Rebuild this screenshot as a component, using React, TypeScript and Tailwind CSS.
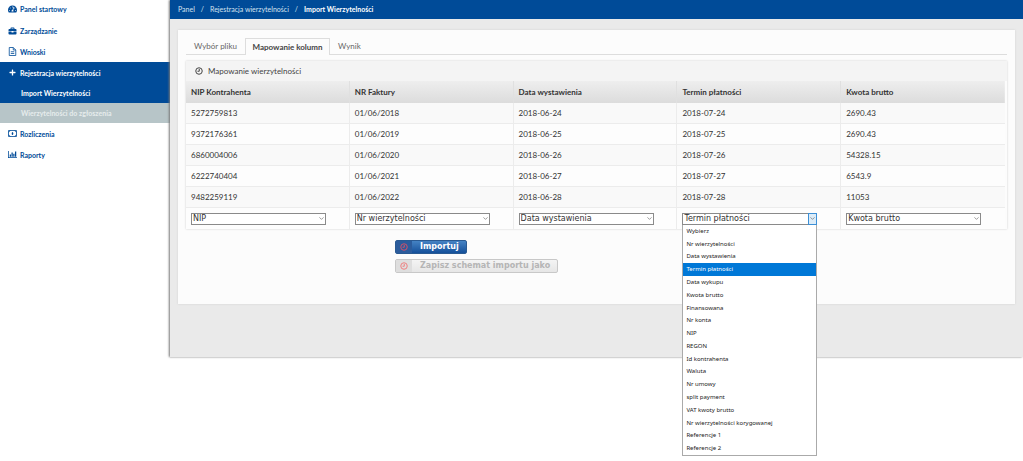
import { useState } from "react";
import { FaTachometerAlt, FaBriefcase, FaPlus } from "react-icons/fa";
import { FiChevronDown } from "react-icons/fi";

const columns = [
  { id: "nip", title: "NIP Kontrahenta", mapped: "NIP" },
  { id: "invoice", title: "NR Faktury", mapped: "Nr wierzytelności" },
  { id: "issued", title: "Data wystawienia", mapped: "Data wystawienia" },
  { id: "due", title: "Termin płatności", mapped: "Termin płatności" },
  { id: "gross", title: "Kwota brutto", mapped: "Kwota brutto" },
];

const rows = [
  ["5272759813", "01/06/2018", "2018-06-24", "2018-07-24", "2690.43"],
  ["9372176361", "01/06/2019", "2018-06-25", "2018-07-25", "2690.43"],
  ["6860004006", "01/06/2020", "2018-06-26", "2018-07-26", "54328.15"],
  ["6222740404", "01/06/2021", "2018-06-27", "2018-07-27", "6543.9"],
  ["9482259119", "01/06/2022", "2018-06-28", "2018-07-28", "11053"],
];

const options = [
  "Wybierz",
  "Nr wierzytelności",
  "Data wystawienia",
  "Termin płatności",
  "Data wykupu",
  "Kwota brutto",
  "Finansowana",
  "Nr konta",
  "NIP",
  "REGON",
  "Id kontrahenta",
  "Waluta",
  "Nr umowy",
  "split payment",
  "VAT kwoty brutto",
  "Nr wierzytelności korygowanej",
  "Referencje 1",
  "Referencje 2",
];

function FileIcon() {
  return (
    <svg viewBox="0 0 18 18" className="w-[9px] h-[9px]" fill="none" stroke="currentColor" strokeWidth="1.6">
      <path d="M2.5 1h8l5 5v11h-13zM10.5 1v5h5M5.5 9.5h7M5.5 13h7" />
    </svg>
  );
}

function MoneyIcon() {
  return (
    <svg viewBox="0 0 18 14" className="w-[9px] h-[7px]" fill="none" stroke="currentColor" strokeWidth="1.6">
      <path d="M1 1h16v12H1zM1 4c1.500 0 3-1.500 3-3M17 4c-1.500 0-3-1.500-3-3M1 10c1.500 0 3 1.500 3 3M17 10c-1.500 0-3 1.500-3 3" />
      <ellipse cx="9" cy="7" rx="1.600" ry="3" fill="currentColor" stroke="none" />
    </svg>
  );
}

function ChartIcon() {
  return (
    <svg viewBox="0 0 18 14" className="w-[9px] h-[7px]" fill="currentColor">
      <path d="M0 0h1.5v12.5H18V14H0zM3.5 7H6v4.5H3.5zM7 3h2.5v8.5H7zM10.5 5.5H13v6h-2.5zM14 1h2.5v10.5H14z" />
    </svg>
  );
}

function ClockIcon() {
  return (
    <svg viewBox="0 0 16 16" className="w-2 h-2" fill="none" stroke="currentColor" strokeWidth="2">
      <circle cx="8" cy="8" r="6.5" />
      <path d="M8.5 4v4.500H5" />
    </svg>
  );
}

function Sidebar() {
  const link = "flex items-center gap-[3px] pl-2 h-[21px] text-[#004b98]";
  return (
    <nav className="w-[170px] shrink-0 text-[7px] leading-[10px] font-bold">
      <a href="#" className="flex items-center gap-[3px] pl-2 pb-[2px] h-5 text-[#004b98]">
        <FaTachometerAlt className="w-[9px] h-2" />
        Panel startowy
      </a>
      <a href="#" className={link}>
        <FaBriefcase className="w-[9px] h-2" />
        Zarządzanie
      </a>
      <a href="#" className={link}>
        <FileIcon />
        Wnioski
      </a>
      <a href="#" className="flex items-center gap-[3px] pl-2 h-[21px] bg-[#004b98] text-white">
        <FaPlus className="w-[9px] h-[7px]" />
        Rejestracja wierzytelności
      </a>
      <a href="#" className="flex items-center pl-[21px] h-5 bg-[#004b98] text-white">
        Import Wierzytelności
      </a>
      <a href="#" className="flex items-center pl-[21px] h-5 bg-[#b7c5c8] text-[#e6ecec]">
        Wierzytelności do zgłoszenia
      </a>
      <a href="#" className={link}>
        <MoneyIcon />
        Rozliczenia
      </a>
      <a href="#" className={link}>
        <ChartIcon />
        Raporty
      </a>
    </nav>
  );
}

function ColumnSelect({ id, title, mapped }: any) {
  const [value, setValue] = useState<string>(mapped);
  const [open, setOpen] = useState(id === "due");

  return (
    <div className="relative w-[135px]">
      <select
        aria-label={title}
        value={value}
        onChange={(e) => setValue(e.target.value)}
        className="block w-full h-3 appearance-none border border-[#8a8a8a] bg-white pl-px font-['DejaVu_Sans'] text-[8px] leading-[10px] text-[#333]"
      >
        {options.map((o) => (
          <option key={o}>{o}</option>
        ))}
      </select>
      <span
        className={
          open
            ? "absolute right-0 top-0 flex h-3 w-[9px] items-center justify-center border border-[#3c8fd6] bg-[#dcecf8] pointer-events-none"
            : "absolute right-0 top-0 flex h-3 w-[9px] items-center justify-center pointer-events-none"
        }
      >
        <FiChevronDown className="h-[7px] w-[7px] shrink-0 text-[#555]" />
      </span>
      {open && (
        <ul
          role="listbox"
          className="absolute left-0 top-3 z-10 grid h-[231px] w-full auto-rows-fr border border-t-0 border-[#aaa] bg-white font-['Noto_Sans'] text-[6px] leading-[10px] text-[#222]"
        >
          {options.map((o) => (
            <li
              key={o}
              role="option"
              aria-selected={o === value}
              onClick={() => {
                setValue(o);
                setOpen(false);
              }}
              className={o === value ? "flex items-center bg-[#0078d7] pl-[3px] text-white" : "flex items-center pl-[3px]"}
            >
              {o}
            </li>
          ))}
        </ul>
      )}
    </div>
  );
}

export default function App() {
  return (
    <div className="flex min-h-screen items-start bg-white font-['Lato',sans-serif] text-[#333]">
      <Sidebar />
      <div className="flex-1 min-w-0 bg-[#eaeaea] pb-[53px] shadow-[-1px_0_2px_#777]">
        <header className="flex items-center gap-[6px] h-[19px] bg-[#004b98] pl-2 pb-[2px] text-[7px] leading-[10px] text-[#d5e2ef]">
          <a href="#">Panel</a>
          <span>/</span>
          <a href="#">Rejestracja wierzytelności</a>
          <span>/</span>
          <span className="font-bold text-white">Import Wierzytelności</span>
        </header>
        <main className="mt-[11px] mx-2 bg-[#fcfcfc] px-2 pt-2 pb-[31px] shadow-[0_0_2px_#d0d0d0]">
          <div className="flex h-[17px] border-b border-[#ddd] text-[8px] leading-[10px] text-[#666]">
            <button type="button" className="px-2 w-[59px] whitespace-nowrap">Wybór pliku</button>
            <button type="button" className="h-[17px] w-[85px] border border-b-0 border-[#ddd] bg-[#fcfcfc] font-bold text-[#444] whitespace-nowrap">
              Mapowanie kolumn
            </button>
            <button type="button" className="px-2">Wynik</button>
          </div>
          <section className="mt-[6px] shadow-[0_0_2px_#ccc]">
            <h2 className="flex items-center gap-[5px] h-5 bg-[#f4f4f4] pl-[9px] text-[8px] leading-[10px] text-[#444]">
              <ClockIcon />
              Mapowanie wierzytelności
            </h2>
            <div className="pr-[2px]">
              <table className="w-full table-fixed border-separate border-spacing-0 text-[8px] leading-[10px]">
                <thead>
                  <tr className="h-[22px] bg-linear-to-b from-[#eeeeee] to-[#dcdcdc]">
                    {columns.map((c) => (
                      <th key={c.id} className="pl-[5px] text-left font-bold border-r border-[#e0e0e0] last:border-r-0">
                        {c.title}
                      </th>
                    ))}
                  </tr>
                </thead>
                <tbody>
                  {rows.map((row) => (
                    <tr key={row[0]} className="h-[21px] odd:bg-[#f9f9f9] even:bg-[#fdfdfd]">
                      {row.map((cell, i) => (
                        <td key={i} className="pl-[5px] border-b border-r border-[#ececec] last:border-r-0">
                          {cell}
                        </td>
                      ))}
                    </tr>
                  ))}
                  <tr className="h-[21px] bg-[#fdfdfd]">
                    {columns.map((c) => (
                      <td key={c.id} className="pl-[5px] border-r border-[#ececec] last:border-r-0">
                        <ColumnSelect {...c} />
                      </td>
                    ))}
                  </tr>
                </tbody>
              </table>
            </div>
          </section>
          <div className="mt-[11px] ml-[209px] flex flex-col items-start gap-[5px] font-['DejaVu_Sans'] text-[8px] leading-[10px] font-bold">
            <button type="button" className="flex h-[14px] items-center rounded-xs border border-[#2a5a92] bg-linear-to-b from-[#4583c4] to-[#14509a] pr-[7px] text-white">
              <span className="mr-2 flex h-3 w-4 items-center justify-center bg-[#2c5c9c] text-[#d0506a]">
                <ClockIcon />
              </span>
              Importuj
            </button>
            <button type="button" disabled className="flex h-[14px] items-center rounded-xs border border-[#c8c8c8] bg-linear-to-b from-[#f4f4f4] to-[#e6e6e6] pr-[7px] text-[#b5b5b5]">
              <span className="mr-2 flex h-3 w-4 items-center justify-center bg-[#dedede] text-[#ee8080]">
                <ClockIcon />
              </span>
              Zapisz schemat importu jako
            </button>
          </div>
        </main>
      </div>
    </div>
  );
}
